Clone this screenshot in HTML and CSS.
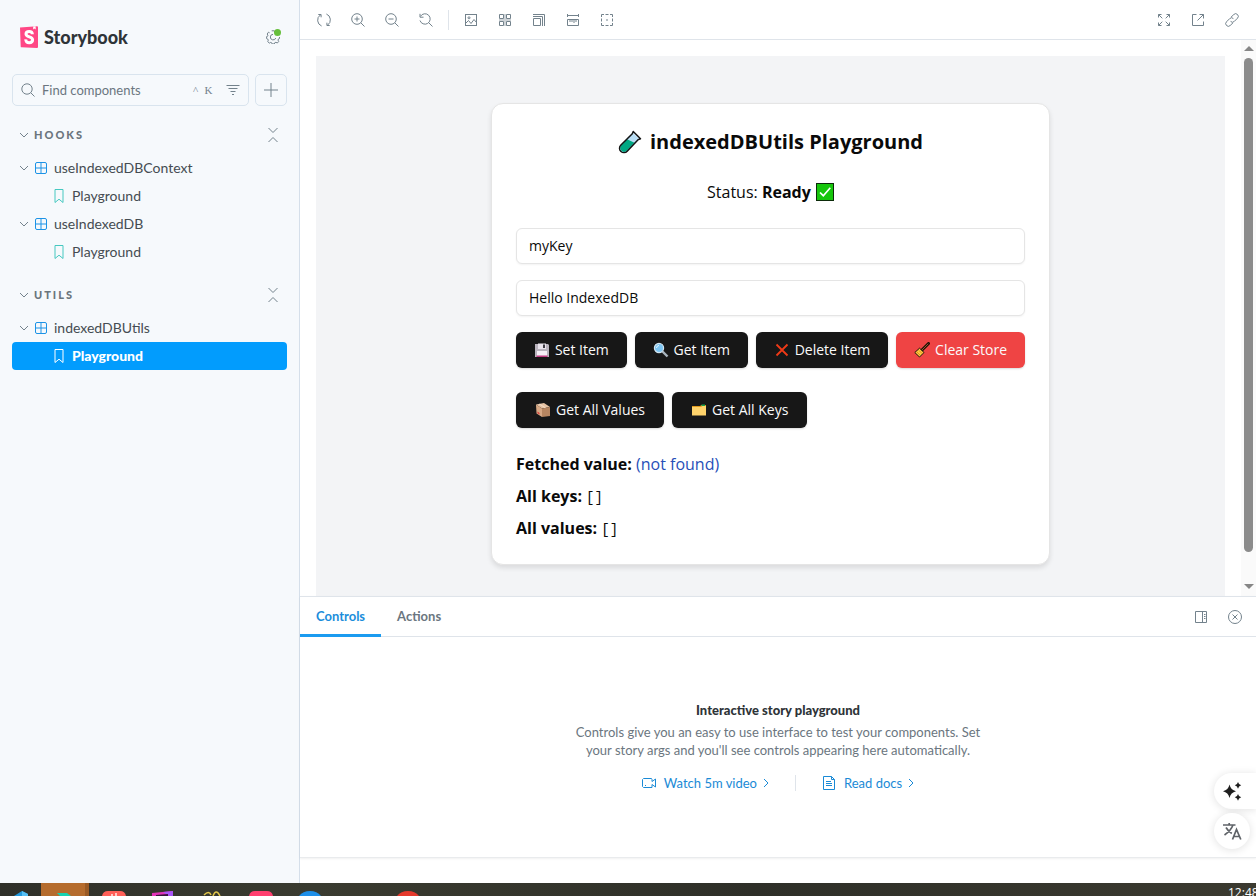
FILE: index.html
```html
<!DOCTYPE html>
<html lang="en">
<head>
<meta charset="utf-8">
<meta name="viewport" content="width=device-width, initial-scale=1">
<title>Utils / indexedDBUtils - Playground ⋅ Storybook</title>
<link rel="stylesheet" href="styles.css">
</head>
<body>
<svg class="defs" aria-hidden="true">
  <symbol id="i-chevron" viewBox="0 0 10 10"><path d="M1 3l4 4 4-4"/></symbol>
  <symbol id="i-collapse" viewBox="0 0 12 16"><path d="M1.500 1l4.500 4.500L10.500 1M1.500 15l4.500-4.500 4.500 4.500"/></symbol>
  <symbol id="i-component" viewBox="0 0 14 14"><rect x="1.500" y="1.500" width="11" height="11" rx="1.500"/><path d="M7 1.500v11M1.500 7h11"/></symbol>
  <symbol id="i-story" viewBox="0 0 14 14"><path d="M3 .5h8v13l-4-3.300-4 3.300z"/></symbol>
</svg>
<div class="screen">
  <div class="app">
    <aside class="sidebar">
      <header class="brand">
        <a class="brand-link" href="#">
          <svg class="brand-mark" viewBox="0 0 18 22"><path fill="#ff4785" d="M0 1.500 17 .2q1 0 1 .8v20q0 1-1 1L1.500 21.300Q.7 21.200.7 20.400z"/><path fill="#fff" d="M13.200.5 15.600.3l.1 3.200-1.200-.9-1.300 1z"/><path fill="none" stroke="#fff" stroke-width="3" d="M12.400 8.300C12.300 6.200 11.200 5.500 9.200 5.500 7.200 5.500 6 6.300 6 7.900c0 3.600 6.600 2.500 6.600 5.900 0 2-1.300 2.900-3.400 2.900-2.300 0-3.500-1.100-3.400-3.300"/></svg>
          <span>Storybook</span>
        </a>
        <button class="settings" type="button" aria-label="Settings">
          <svg class="icon" viewBox="0 0 14 14"><path d="M5.700.8h2.600l.4 1.500 1.200.5 1.400-.8 1 1 .2 1M3.600 2.800 2.500 2.200 1.200 4l.7 1.300-.4 1-.9.300v2l1.100.4.6 1.200-.6 1.400 1.600 1.500 1.400-.7 1 .4.500 1.200h2l.5-1.200 1.200-.5 1.400.7 1.400-1.500-.7-1.400.5-1.200 1-.4V7M7 4.300A2.800 2.800 0 1 0 9.800 8"/></svg>
          <span class="dot"></span>
        </button>
      </header>
      <div class="search-row">
        <div class="search">
          <svg class="icon" viewBox="0 0 14 14"><circle cx="6" cy="6" r="5.200"/><path d="M9.800 9.800l3.700 3.700"/></svg>
          <input type="text" placeholder="Find components" aria-label="Find components">
          <kbd>^</kbd><kbd>K</kbd>
          <button class="filter" type="button" aria-label="Tag filters"><svg class="icon" viewBox="0 0 14 14"><path d="M.5 2.500h13M2.500 5.500h9M4.500 8.500h5M6 11.500h2"/></svg></button>
        </div>
        <button class="add" type="button" aria-label="Create a new story"><svg class="icon" viewBox="0 0 14 14"><path d="M7 0v14M0 7h14"/></svg></button>
      </div>
      <nav class="tree">
        <section class="group">
          <div class="group-head">
            <button class="group-title" type="button"><svg class="chev"><use href="#i-chevron"/></svg>HOOKS</button>
            <button class="collapse" type="button" aria-label="Collapse all"><svg><use href="#i-collapse"/></svg></button>
          </div>
          <button class="row" type="button"><svg class="chev"><use href="#i-chevron"/></svg><svg class="icon comp"><use href="#i-component"/></svg>useIndexedDBContext</button>
          <a class="row leaf" href="#"><svg class="icon story"><use href="#i-story"/></svg>Playground</a>
          <button class="row" type="button"><svg class="chev"><use href="#i-chevron"/></svg><svg class="icon comp"><use href="#i-component"/></svg>useIndexedDB</button>
          <a class="row leaf" href="#"><svg class="icon story"><use href="#i-story"/></svg>Playground</a>
        </section>
        <section class="group">
          <div class="group-head">
            <button class="group-title" type="button"><svg class="chev"><use href="#i-chevron"/></svg>UTILS</button>
            <button class="collapse" type="button" aria-label="Collapse all"><svg><use href="#i-collapse"/></svg></button>
          </div>
          <button class="row" type="button"><svg class="chev"><use href="#i-chevron"/></svg><svg class="icon comp"><use href="#i-component"/></svg>indexedDBUtils</button>
          <a class="row leaf selected" href="#"><svg class="icon story"><use href="#i-story"/></svg>Playground</a>
        </section>
      </nav>
    </aside>

    <main class="main">
      <div class="toolbar">
        <button class="tool" type="button" aria-label="Reload"><svg class="icon" viewBox="0 0 14 14"><path d="M4.600 13A6.300 6.300 0 0 1 3.300 2M1.300 1.500h2.800v2.800M9.400 1a6.300 6.300 0 0 1 1.300 11M12.700 12.500H9.900V9.700"/></svg></button>
        <button class="tool" type="button" aria-label="Zoom in"><svg class="icon" viewBox="0 0 14 14"><circle cx="6" cy="6" r="5.300"/><path d="M9.800 9.800l3.700 3.700M6 3.500v5M3.500 6h5"/></svg></button>
        <button class="tool" type="button" aria-label="Zoom out"><svg class="icon" viewBox="0 0 14 14"><circle cx="6" cy="6" r="5.300"/><path d="M9.800 9.800l3.700 3.700M3.500 6h5"/></svg></button>
        <button class="tool" type="button" aria-label="Reset zoom"><svg class="icon" viewBox="0 0 14 14"><path d="M1.500 3.300A5.200 5.200 0 1 1 1 7.500M1 .8v3.400h3.500M9.800 9.800l3.700 3.700"/></svg></button>
        <span class="divider"></span>
        <button class="tool" type="button" aria-label="Change background"><svg class="icon" viewBox="0 0 14 14"><rect x="1.500" y="1.500" width="11" height="11"/><circle cx="5" cy="4.800" r="1"/><path d="M1.500 10.500 4.500 7.500l2.500 3 3-4 2.500 3"/></svg></button>
        <button class="tool" type="button" aria-label="Apply a grid"><svg class="icon" viewBox="0 0 14 14"><path d="M1.500 1.500h4v4h-4zM8.500 1.500h4v4h-4zM1.500 8.500h4v4h-4zM8.500 8.500h4v4h-4z"/><path d="M7 1v12M1 7h12" stroke-width="2" stroke-opacity=".35"/></svg></button>
        <button class="tool" type="button" aria-label="Viewport size"><svg class="icon" viewBox="0 0 14 14"><path d="M1.500 5.500h7v7h-7zM1 3.500h9.500V13M1 1.500h11.500V13"/></svg></button>
        <button class="tool" type="button" aria-label="Measure"><svg class="icon" viewBox="0 0 14 14"><path d="M1.500 6.500h11v6h-11zM1.500 1v3M12.500 1v3M1.500 2.500h11M4 7v2M6 7v2M8 7v3M10 7v2"/></svg></button>
        <button class="tool" type="button" aria-label="Outline"><svg class="icon" viewBox="0 0 14 14"><path d="M1.500 4V1.500H4M5.500 1.500h3M10 1.500h2.500V4M12.500 5.500v3M12.500 10v2.500H10M8.500 12.500h-3M4 12.500H1.500V10M1.500 8.500v-3M6 7h2"/></svg></button>
        <span class="spacer"></span>
        <button class="tool" type="button" aria-label="Full screen"><svg class="icon" viewBox="0 0 14 14"><path d="M1.500 4.500v-3h3M9.500 1.500h3v3M12.500 9.500v3h-3M4.500 12.500h-3v-3M1.500 1.500 5.300 5.300M12.500 1.500 8.700 5.300M12.500 12.500 8.700 8.700M1.500 12.500l3.800-3.800"/></svg></button>
        <button class="tool" type="button" aria-label="Open in new tab"><svg class="icon" viewBox="0 0 14 14"><path d="M5.500 1.500h-4v11h11v-4M8.500 1.500h4v4M12.500 1.500 6.500 7.500"/></svg></button>
        <button class="tool" type="button" aria-label="Copy link"><svg class="icon" viewBox="0 0 14 14"><path d="M6 4.200 8.800 1.500a2.600 2.600 0 0 1 3.700 3.700L9.300 8.400a2.600 2.600 0 0 1-3.700 0M8 9.800 5.200 12.500a2.600 2.600 0 0 1-3.700-3.700L4.700 5.600a2.600 2.600 0 0 1 3.700 0"/></svg></button>
      </div>

      <div class="preview">
        <div class="frame">
          <div class="stage">
            <div class="card">
              <h2><svg class="emoji-lg" viewBox="0 0 24 24"><path d="M14.500 2.500 21.500 9 9.300 21.300a4.300 4.300 0 0 1-6.600-6z" fill="#b9def5"/><path d="M9 9.300 16.500 12.700 8.800 20.800a4 4 0 0 1-5.900-5.300z" fill="#00a883"/><path d="M15.200 1.500 22.500 8.700 20.300 9.600 9.200 21.200a4.400 4.400 0 0 1-6.500-6L14.300 3.700z" fill="none" stroke="#141414" stroke-width="1.500" stroke-linejoin="round"/></svg>indexedDBUtils Playground</h2>
              <p class="status">Status: <strong>Ready</strong> <svg class="emoji-md" role="img" aria-label="check" viewBox="0 0 18 18"><rect x=".5" y=".5" width="17" height="17" fill="#16c60c" stroke="#0c2b0a"/><path d="M4 9.500 7.300 12.700 14.300 4.800" fill="none" stroke="#fff" stroke-width="1.700"/></svg></p>
              <div class="fields">
                <input type="text" value="myKey" aria-label="Key">
                <input type="text" value="Hello IndexedDB" aria-label="Value">
                <div class="actions fill">
                  <button type="button"><svg class="emoji" viewBox="0 0 16 16"><path fill="#b9b3bd" d="M1 2h13l1 1v12H1z"/><path fill="#e9e4ec" d="M4 1.500h8V7H4z"/><path fill="#3c3a40" d="M9 2.500h2V6H9z"/><path fill="#f6eff7" d="M3 9h10v5H3z"/><path fill="#c13a82" d="M2.500 13.500h11V15h-11z"/></svg>Set Item</button>
                  <button type="button"><svg class="emoji" viewBox="0 0 16 16"><path d="M9.500 9.500 14.500 14.500" stroke="#a9b4bd" stroke-width="2.400"/><circle cx="6" cy="6" r="4.600" fill="#7cc4f2" stroke="#d3e6f2" stroke-width="1.200"/><path d="M3.500 6Q3.700 3.700 6 3.500" fill="none" stroke="#e8f7ff"/></svg>Get Item</button>
                  <button type="button"><svg class="emoji" viewBox="0 0 16 16"><path d="M2.500 2.500 13.500 13.500M13.500 2.500 2.500 13.500" stroke="#f03a17" stroke-width="1.800"/></svg>Delete Item</button>
                  <button class="danger" type="button"><svg class="emoji" viewBox="0 0 16 16"><path d="M8 8 14.500 1.500" stroke="#1d1208" stroke-width="3" stroke-linecap="round"/><path d="M8 8 14.300 1.700" stroke="#9a5c28" stroke-width="1"/><path d="M5.500 6.200 10 10.500 5.500 15 .8 10.500z" fill="#ffc83d" stroke="#1d1208" stroke-linejoin="round"/><path d="M3 10l3 3M5 8.500l3 3" stroke="#d67d22" stroke-width=".8"/></svg>Clear Store</button>
                </div>
              </div>
              <div class="actions roomy">
                <button type="button"><svg class="emoji" viewBox="0 0 16 16"><path fill="#e6c3a4" d="M1 2.500 9 1l6 4-8 1.500z"/><path fill="#d7a884" d="M1 2.500 7 6.500V15L1.500 11.500z"/><path fill="#b78661" d="M7 6.500 15 5v9L7 15z"/><path fill="#f3ddc8" d="M3.600 2 9.800 6 11 5.800 5 1.700z"/><path fill="#d93a3a" d="M2.500 9.500 4.500 11v1.500l-2-1.300z"/></svg>Get All Values</button>
                <button type="button"><svg class="emoji" viewBox="0 0 16 16"><path fill="#e19a1c" d="M1 4h8l1.500-1H15v10H1z"/><path fill="#16a34a" d="M10.500 2.500H14V4h-3.500z"/><path fill="#ffd36b" d="M1 5h9l1.500-1H15v9.500H1z"/></svg>Get All Keys</button>
              </div>
              <div class="results">
                <p><strong>Fetched value:</strong> <span class="missing">(not found)</span></p>
                <p><strong>All keys:</strong> <code>[]</code></p>
                <p><strong>All values:</strong> <code>[]</code></p>
              </div>
            </div>
          </div>
        </div>
        <div class="scrollbar" aria-hidden="true">
          <span class="arrow up"></span><span class="thumb"></span><span class="arrow down"></span>
        </div>
      </div>

      <section class="panel">
        <div class="tabs">
          <button class="tab active" type="button">Controls</button>
          <button class="tab" type="button">Actions</button>
          <span class="spacer"></span>
          <button class="tool" type="button" aria-label="Change orientation"><svg class="icon" viewBox="0 0 14 14"><path d="M1.500 1.500h11v11h-11zM8.500 1.500v11M10 4.500h1.500M10 6.500h1.500M10 8.500h1.500"/></svg></button>
          <button class="tool" type="button" aria-label="Hide addons"><svg class="icon" viewBox="0 0 14 14"><circle cx="7" cy="7" r="6.500"/><path d="M4.500 4.500l5 5M9.500 4.500l-5 5"/></svg></button>
        </div>
        <div class="empty">
          <h3>Interactive story playground</h3>
          <p>Controls give you an easy to use interface to test your components. Set your story args and you'll see controls appearing here automatically.</p>
          <div class="links">
            <a href="#"><svg class="icon" viewBox="0 0 14 14"><path d="M1.500 2.500h8l.5 1v2l3.500-2.500v8L10 8.500v3H1.500l-1-1v-7zM3 9.500h1"/></svg>Watch 5m video<svg class="go" viewBox="0 0 6 10"><path d="M1 1l4 4-4 4"/></svg></a>
            <span class="divider"></span>
            <a href="#"><svg class="icon" viewBox="0 0 14 14"><path d="M1.500.5h8l3 3v10h-11zM9.500.5v3h3M4 5.500h5M4 7.500h6M4 9.500h6"/></svg>Read docs<svg class="go" viewBox="0 0 6 10"><path d="M1 1l4 4-4 4"/></svg></a>
          </div>
        </div>
      </section>
      <div class="below"></div>
    </main>
  </div>

  <footer class="taskbar">
    <span class="task-icons">
      <svg width="430" height="13" viewBox="0 0 430 13"><path fill="#b56c2d" d="M41 0h44v13H41z"/><path fill="#9a5a24" d="M85 0h4v13h-4z"/><path fill="#2299dd" d="M14 13 22 8l6 3v2z"/><path fill="#56c0f5" d="M22 8l6 3v2h-6z"/><path fill="#16d3b0" d="M57 10h10l4 3H60z"/><path fill="#ff5f57" d="M102 13q1-5 6-5h12q5 0 6 5z"/><path fill="#ffc9c4" d="M111 11h2v2h-2zM115 10h2v3h-2z"/><path fill="#e233b8" d="M152 10l21-2v5h-21z"/><path fill="#a855f7" d="M163 9l10-1v5h-4z"/><path fill="#35133a" d="M156 12l12-1v2h-12z"/><path d="M204 12q5-5 7 0M213 13q3-8 7 0" fill="none" stroke="#e2c64a" stroke-width="1.500"/><path fill="#ff3f6f" d="M249 13q1-5 6-5h12q5 0 6 5z"/><path fill="#1e8fe8" d="M299 13q4-5 11-5t11 5z"/><path fill="#e5392c" d="M397 13q4-5 11-5t11 5z"/></svg>
    </span>
    <time class="clock">12:48</time>
  </footer>

  <div class="floaters">
    <button class="float wide" type="button" aria-label="Assistant"><svg viewBox="0 0 20 20"><path fill="#1f1f1f" d="M7.500 3.500Q8.700 9 14 10.200 8.700 11.500 7.500 17 6.300 11.500 1 10.200 6.300 9 7.500 3.500zM16 1q.6 2.700 3.200 3.300Q16.600 5 16 7.700 15.400 5 12.800 4.300 15.400 3.700 16 1zM16 13q.6 2.700 3.200 3.300-2.600.7-3.200 3.400-.6-2.700-3.200-3.400Q15.400 15.700 16 13z"/></svg></button>
    <button class="float" type="button" aria-label="Translate"><svg viewBox="0 0 20 20"><path d="M1 4h12.500M7.200 2v2M11 4Q9 9.500 2.500 14M4 6.500Q6 10 9.800 12.500M10.500 18.500 14.500 8.500l4.300 10M12 15.500h5.400" fill="none" stroke="#5f6368" stroke-width="1.700"/></svg></button>
  </div>
</div>
</body>
</html>
```

FILE: styles.css
```css
* { box-sizing: border-box; }

:root {
  --ui: Lato, "Noto Sans", sans-serif;
  --preview: "Open Sans", "Noto Sans", sans-serif;
  --line: #dfe4ea;
  --muted: #73828c;
  --ink: #2e3438;
  --blue: #029cfd;
  --link: #1a8ad6;
}

body { margin: 0; font-family: var(--ui); font-size: 14px; color: var(--ink); background: #fff; }
button, input { font: inherit; color: inherit; margin: 0; }
button { display: inline-flex; align-items: center; border: 0; padding: 0; background: none; cursor: pointer; }
a { color: inherit; text-decoration: none; }
h2, h3, p { margin: 0; }
svg { flex: none; fill: none; stroke: none; }
.defs { position: absolute; width: 0; height: 0; }
.icon { width: 14px; height: 14px; stroke: currentColor; stroke-width: 1; }
.spacer { flex: 1; }

.screen { display: flex; flex-direction: column; height: 100vh; overflow: hidden; }
.app { flex: 1; min-height: 0; display: grid; grid-template-columns: 300px minmax(0, 1fr); }

.sidebar { background: #f6f9fc; border-right: 1px solid #d5dfea; padding: 22px 12px 0; }
.brand { display: flex; align-items: center; justify-content: space-between; height: 30px; padding: 0 6px 0 8px; }
.brand-link { display: flex; align-items: center; gap: 6px; font-size: 18px; font-weight: 900; line-height: 24px; }
.brand-mark { width: 18px; height: 22px; }
.settings { position: relative; width: 16px; height: 16px; justify-content: center; color: var(--muted); }
.dot { position: absolute; top: 0; right: 0; width: 7px; height: 7px; border-radius: 50%; background: #66bf3c; }

.search-row { display: flex; gap: 6px; margin-top: 22px; }
.search { flex: 1; min-width: 0; display: flex; align-items: center; height: 32px; padding: 0 8px; border: 1px solid #d9e4ee; border-radius: 5px; color: var(--muted); }
.search input { flex: 1; min-width: 0; border: 0; outline: 0; background: none; padding: 0 0 0 7px; font-size: 13px; line-height: 20px; }
.search input::placeholder { color: #6b7680; opacity: 1; }
kbd { width: 13px; text-align: center; font: 11px "Liberation Serif", serif; }
.filter { margin-left: 11px; }
.add { flex: none; width: 32px; height: 32px; justify-content: center; border: 1px solid #d9e4ee; border-radius: 5px; color: var(--muted); }

.group { margin-top: 15px; }
.group-head { display: flex; align-items: center; justify-content: space-between; height: 28px; margin-bottom: 5px; padding: 0 8px 0 7px; color: var(--muted); }
.group-title { gap: 5px; font-size: 11px; line-height: 16px; font-weight: 900; letter-spacing: 2px; color: #6b757d; }
.chev { width: 10px; height: 10px; stroke: var(--muted); }
.collapse svg { width: 12px; height: 16px; stroke: currentColor; }
.row { display: flex; align-items: center; width: 100%; height: 28px; padding-left: 7px; border-radius: 4px; color: #454c52; line-height: 20px; }
.comp { margin: 0 6px 0 5px; color: #1c93e6; }
.leaf { padding-left: 40px; gap: 6px; }
.story { color: #46c8c0; }
.selected { background: var(--blue); color: #fff; font-weight: 900; }
.selected .story { color: #fff; }

.main { display: flex; flex-direction: column; min-width: 0; min-height: 0; }
.toolbar { display: flex; align-items: center; gap: 6px; height: 40px; padding: 0 10px; border-bottom: 1px solid var(--line); }
.tool { width: 28px; height: 28px; justify-content: center; color: var(--muted); }
.toolbar .divider { width: 1px; height: 20px; margin: 0 2px; background: var(--line); }

.preview { flex: 1; min-height: 0; display: flex; }
.frame { flex: 1; min-width: 0; padding: 16px 16px 0; font-family: var(--preview); font-size: 16px; line-height: 24px; color: #0a0a0a; overflow: hidden; }
.stage { display: flex; justify-content: center; min-height: 100%; padding: 47px 24px; background: #f3f4f6; }
.card { display: flex; flex-direction: column; gap: 24px; width: 559px; max-width: 100%; padding: 24px; border: 1px solid #e5e5e5; border-radius: 12px; background: #fff; box-shadow: 0 3px 5px rgba(0, 0, 0, .1); }
.card h2 { display: flex; align-items: center; justify-content: center; gap: 8px; font-size: 20px; font-weight: 700; line-height: 28px; }
.emoji-lg { width: 24px; height: 24px; }
.emoji-md { width: 18px; height: 18px; margin-left: 1px; vertical-align: -3px; }
.emoji { width: 16px; height: 16px; margin-right: 5px; }
.status { text-align: center; }
.fields { display: flex; flex-direction: column; gap: 16px; }
.fields input { width: 100%; height: 36px; padding: 0 12px 2px; border: 1px solid #e5e5e5; border-radius: 6px; background: #fff; font-size: 14px; box-shadow: 0 1px 2px rgba(0, 0, 0, .05); }
.actions { display: flex; flex-wrap: wrap; gap: 8px; }
.actions button { height: 36px; padding: 0 16px; justify-content: center; border-radius: 6px; background: #171717; color: #fafafa; font-size: 14px; white-space: nowrap; box-shadow: 0 1px 2px rgba(0, 0, 0, .15); }
.actions.fill button { flex: 1 1 auto; }
.actions.roomy button { padding: 0 19px; }
.actions .danger { background: #ef4444; }
.results { display: flex; flex-direction: column; gap: 8px; }
.results code { font: 14px "Liberation Mono", monospace; }
.missing { color: #2850b8; }

.scrollbar { display: flex; flex-direction: column; align-items: center; width: 15px; padding: 6px 0 7px; background: #fafafa; }
.arrow { border: 5px solid transparent; border-top: 0; border-bottom: 5px solid #868686; }
.arrow.down { transform: rotate(180deg); }
.thumb { width: 9px; height: 91%; margin: 7px 0 auto; border-radius: 5px; background: #8b8b8b; }

.panel { height: 262px; border-top: 1px solid var(--line); border-bottom: 1px solid #e9ebed; box-shadow: 0 1px 2px rgba(0, 0, 0, .06); display: flex; flex-direction: column; }
.tabs { display: flex; align-items: center; height: 40px; padding-right: 7px; gap: 6px; border-bottom: 1px solid var(--line); }
.tab { height: 40px; padding: 1px 16px 0; margin-right: -6px; border-bottom: 3px solid transparent; font-size: 13px; font-weight: 700; color: #6b7680; }
.tab.active { color: #1b8ddb; border-color: #1b9bf0; }
.empty { flex: 1; display: flex; flex-direction: column; align-items: center; justify-content: center; padding-bottom: 2px; font-size: 13px; line-height: 18px; text-align: center; }
.empty h3 { font-size: 13px; font-weight: 900; line-height: 18px; margin-bottom: 4px; }
.empty p { max-width: 415px; color: #6b7680; }
.links { display: flex; align-items: center; gap: 26px; margin-top: 15px; color: var(--link); }
.links a { display: flex; align-items: center; line-height: 18px; }
.links a .icon { margin-right: 8px; }
.links .divider { width: 1px; height: 16px; background: var(--line); }
.go { width: 6px; height: 10px; margin-left: 6px; stroke: currentColor; }
.below { height: 25px; }

.taskbar { display: flex; justify-content: space-between; height: 13px; background: linear-gradient(90deg, #2f3029, #3a3b30 25%, #2e2f28 60%, #3b3a30); overflow: hidden; }
.task-icons svg { display: block; }
.clock { width: 28px; margin-top: 2px; font: 12px/16px "Open Sans", sans-serif; color: #fff; white-space: nowrap; }

.floaters { position: absolute; right: 0; bottom: 47px; display: flex; flex-direction: column; gap: 4px; }
.float { width: 36px; height: 36px; justify-content: center; border-radius: 50%; background: #fff; box-shadow: 0 1px 8px rgba(0, 0, 0, .12); }
.float svg { width: 20px; height: 20px; }
.float.wide { width: 42px; padding-right: 6px; border-radius: 18px 0 0 18px; }
```
